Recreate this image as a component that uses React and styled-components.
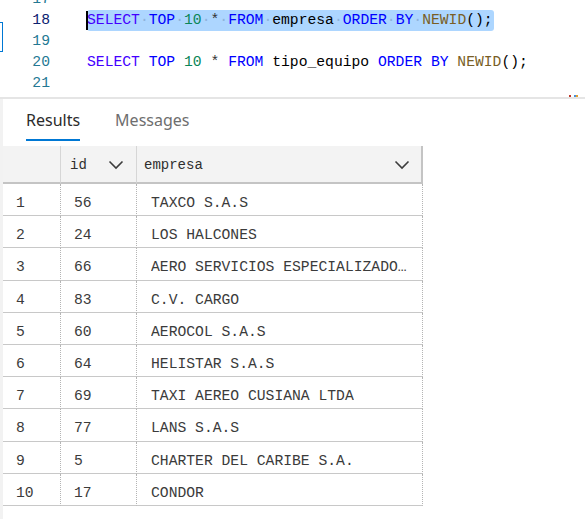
import React from 'react';
import styled, { createGlobalStyle } from 'styled-components';

const GlobalStyle = createGlobalStyle`
  html, body {
    margin: 0;
    padding: 0;
    background: #ffffff;
  }
  body {
    width: 585px;
    height: 519px;
    overflow: hidden;
  }
`

const mono = `"Liberation Mono", "DejaVu Sans Mono", monospace`

const Page = styled.div`
  display: flex;
  flex-direction: column;
  width: 585px;
  height: 519px;
  overflow: hidden;
`

const Editor = styled.div`
  position: relative;
  height: 97px;
  border-bottom: 2px solid #e5e5e5;
  overflow: hidden;
  font-family: ${mono};
  font-size: 14.7px;
`

const Lines = styled.div`
  display: flex;
  flex-direction: column;
  margin-top: -11px;
`

const Line = styled.div`
  display: flex;
  align-items: center;
  height: 21px;
  line-height: 21px;
  white-space: pre;
`

const LineNo = styled.span`
  width: 50px;
  text-align: right;
  color: ${p => (p.active ? '#0b216f' : '#237893')};
`

const Code = styled.span`
  margin-left: 37px;
  color: #000;
`

const Selection = styled.span`
  position: relative;
  display: inline-block;
  height: 21px;
  background: #add6ff;
  border-radius: 3px;
  padding-right: 1px;

  &::before {
    content: '';
    position: absolute;
    left: -1px;
    top: 1px;
    width: 2px;
    height: 19px;
    background: #000;
  }
`

const Tok = styled.span`
  color: ${p => p.c};
`

const Dot = styled.span`
  color: #8fb3dc;
`

const GlyphBox = styled.span`
  position: absolute;
  left: -10px;
  top: 22px;
  width: 11px;
  height: 28px;
  border: 1px solid #0078d4;
`

const RulerMark = styled.span`
  position: absolute;
  bottom: 0;
  left: ${p => p.x}px;
  width: 2px;
  height: 2px;
  background: ${p => p.c};
`

const Results = styled.div`
  flex: 1;
  display: flex;
  flex-direction: column;
  border-left: 3px solid #f2f2f2;
`

const Tabs = styled.div`
  display: flex;
  gap: 35px;
  height: 47px;
  padding-left: 23px;
  font-family: "Noto Sans", sans-serif;
  font-size: 16px;
`

const Tab = styled.div`
  display: flex;
  align-items: center;
  height: 38px;
  padding-top: 2px;
  color: ${p => (p.active ? '#2b2b2b' : '#6e6e6e')};
  border-bottom: 2px solid ${p => (p.active ? '#0078d4' : 'transparent')};
`

const Grid = styled.div`
  display: grid;
  grid-template-columns: 58px 76px 286px;
  width: 420px;
  font-family: ${mono};
  color: #3b3b3b;
`

const HeadCell = styled.div`
  display: flex;
  align-items: center;
  justify-content: space-between;
  height: 38px;
  box-sizing: border-box;
  padding: 2px ${p => p.pr || 0}px 0 ${p => p.pl || 0}px;
  background: #f3f3f3;
  border-right: ${p => (p.last ? '2px solid #c4c4c4' : '1px solid #d6d6d6')};
  border-bottom: 2px solid #c4c4c4;
  font-size: 14px;
  color: #2f2f2f;
`

const Cell = styled.div`
  display: flex;
  align-items: center;
  height: 32.2px;
  box-sizing: border-box;
  padding: 7px 8px 0 ${p => p.pl}px;
  border-bottom: 1px solid #c8c8c8;
  border-right: 1px dotted #b4b4b4;
  font-size: 14.7px;
  white-space: nowrap;
  overflow: hidden;

  span {
    overflow: hidden;
    text-overflow: ellipsis;
  }
`

const Chevron = () => (
  <svg width="16" height="10" viewBox="0 0 16 10">
    <path d="M1.5 1.5 L8 8 L14.5 1.5" fill="none" stroke="#3c3c3c" strokeWidth="1.6" />
  </svg>
)

const rows = [
  ['56', 'TAXCO S.A.S'],
  ['24', 'LOS HALCONES'],
  ['66', 'AERO SERVICIOS ESPECIALIZADOS S.A.S'],
  ['83', 'C.V. CARGO'],
  ['60', 'AEROCOL S.A.S'],
  ['64', 'HELISTAR S.A.S'],
  ['69', 'TAXI AEREO CUSIANA LTDA'],
  ['77', 'LANS S.A.S'],
  ['5', 'CHARTER DEL CARIBE S.A.'],
  ['17', 'CONDOR'],
]

const KW = '#0000ff'
const DML = '#4400ff'
const NUM = '#098658'
const FN = '#795e26'

function App() {
  const S = () => <Dot>·</Dot>

  return (
    <Page>
      <GlobalStyle />
      <Editor>
        <GlyphBox />
        <Lines>
          <Line><LineNo>17</LineNo></Line>
          <Line>
            <LineNo active>18</LineNo>
            <Code>
              <Selection>
                <Tok c={DML}>SELECT</Tok><S /><Tok c={KW}>TOP</Tok><S /><Tok c={NUM}>10</Tok><S />
                <Tok c="#333">*</Tok><S /><Tok c={KW}>FROM</Tok><S />empresa<S />
                <Tok c={KW}>ORDER</Tok><S /><Tok c={KW}>BY</Tok><S /><Tok c={FN}>NEWID</Tok>();
              </Selection>
            </Code>
          </Line>
          <Line><LineNo>19</LineNo></Line>
          <Line>
            <LineNo>20</LineNo>
            <Code>
              <Tok c={DML}>SELECT</Tok> <Tok c={KW}>TOP</Tok> <Tok c={NUM}>10</Tok> <Tok c="#333">*</Tok>{' '}
              <Tok c={KW}>FROM</Tok> tipo_equipo <Tok c={KW}>ORDER</Tok> <Tok c={KW}>BY</Tok>{' '}
              <Tok c={FN}>NEWID</Tok>();
            </Code>
          </Line>
          <Line><LineNo>21</LineNo></Line>
        </Lines>
        <RulerMark x={569} c="#c0392b" />
        <RulerMark x={574} c="#4a90d9" />
        <RulerMark x={576} c="#e0a030" />
      </Editor>

      <Results>
        <Tabs>
          <Tab active>Results</Tab>
          <Tab>Messages</Tab>
        </Tabs>
        <Grid>
          <HeadCell />
          <HeadCell pl={9} pr={12}>id<Chevron /></HeadCell>
          <HeadCell pl={7} pr={11} last>empresa<Chevron /></HeadCell>
          {rows.map(([id, name], i) => (
            <React.Fragment key={i}>
              <Cell pl={13}>{i + 1}</Cell>
              <Cell pl={13}>{id}</Cell>
              <Cell pl={14}><span>{name}</span></Cell>
            </React.Fragment>
          ))}
        </Grid>
      </Results>
    </Page>
  );
}

export default App;
